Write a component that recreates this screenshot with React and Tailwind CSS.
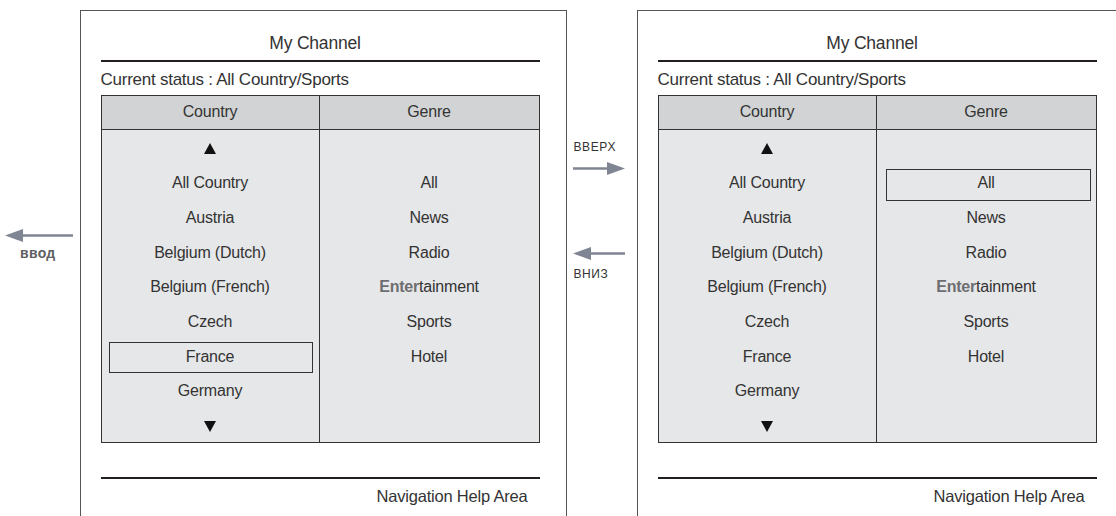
const countries = ['All Country', 'Austria', 'Belgium (Dutch)', 'Belgium (French)', 'Czech', 'France', 'Germany'];
const genres = ['All', 'News', 'Radio', 'Entertainment', 'Sports', 'Hotel'];

function Tri({ down = false }) {
  return (
    <svg width="12" height="11" viewBox="0 0 12 11">
      {down ? <polygon points="0,0 12,0 6,11" fill="#111" /> : <polygon points="6,0 12,11 0,11" fill="#111" />}
    </svg>
  );
}

function Row({ children, box, boxClass }) {
  return (
    <div className="relative h-[34.67px] flex items-center justify-center pt-[4px]">
      {box && <div className={`absolute border-[1.5px] border-[#333] ${boxClass}`} />}
      <span className="relative">{children}</span>
    </div>
  );
}

function GenreLabel({ g }) {
  if (g === 'Entertainment') {
    return (
      <>
        <span className="font-bold text-[#6d6e71]">Enter</span>tainment
      </>
    );
  }
  return g;
}

function Panel({ selCountry, selGenre }) {
  return (
    <div className="shrink-0 w-[487px] h-[530px] mt-[10px] border-[1.5px] border-[#555] pl-[19.5px]">
      <div className="w-[439px]">
        <div className="h-[48.5px] pt-[22px] pr-[10px] leading-[20px] text-center text-[17.5px]">My Channel</div>
        <div className="h-[2.5px] bg-[#231f20]" />
        <div className="h-[32.5px] pt-[7.5px] leading-[20px] text-[17px] tracking-[-0.25px]">Current status : All Country/Sports</div>
        <div className="border border-[#333]">
          <div className="grid grid-cols-[218px_1fr] h-[34px] bg-[#d1d3d4] border-b border-[#333]">
            <div className="flex items-center justify-center border-r border-[#333]">Country</div>
            <div className="flex items-center justify-center">Genre</div>
          </div>
          <div className="grid grid-cols-[218px_1fr] h-[312px] bg-[#e6e7e8]">
            <div className="border-r border-[#333]">
              <Row><Tri /></Row>
              {countries.map((c) => (
                <Row key={c} box={c === selCountry} boxClass="left-[7px] right-[6px] top-[4.5px] h-[31px]">
                  {c}
                </Row>
              ))}
              <Row><Tri down /></Row>
            </div>
            <div>
              <Row />
              {genres.map((g) => (
                <Row key={g} box={g === selGenre} boxClass="left-[9px] right-[5px] top-[4.5px] h-[32px]">
                  <GenreLabel g={g} />
                </Row>
              ))}
            </div>
          </div>
        </div>
        <div className="mt-[34px] h-[2.5px] bg-[#231f20]" />
        <div className="mt-[6.5px] leading-[20px] text-right pr-[12px] text-[16.5px]">Navigation Help Area</div>
      </div>
    </div>
  );
}

function Arrow({ left = false, width = 52 }) {
  return (
    <svg width={width} height="13" viewBox={`0 0 ${width} 13`}>
      {left ? (
        <>
          <polygon points={`0,6.5 18,0 18,13`} fill="#7f8593" />
          <rect x="16" y="5.25" width={width - 16} height="2.5" fill="#7f8593" />
        </>
      ) : (
        <>
          <rect x="0" y="5.25" width={width - 16} height="2.5" fill="#7f8593" />
          <polygon points={`${width},6.5 ${width - 18},0 ${width - 18},13`} fill="#7f8593" />
        </>
      )}
    </svg>
  );
}

export default function App() {
  return (
    <div
      className="w-[1116px] h-[516px] overflow-hidden bg-white flex text-[16px] text-[#333] tracking-[-0.2px]"
      style={{ fontFamily: '"Liberation Sans", Arial, sans-serif' }}
    >
      <div className="shrink-0 w-[80px] pt-[229px] pl-[5px]">
        <Arrow left width={68} />
        <div className="mt-[3px] pl-[15px] leading-[16px] text-[14px] font-bold tracking-[0.3px] text-[#5f6063]">ввод</div>
      </div>
      <Panel selCountry="France" selGenre={null} />
      <div className="shrink-0 w-[70px] pt-[140px] pl-[5.5px] text-[12px] leading-[14px] tracking-[0.6px] text-[#333]">
        <div className="pl-[1px]">ВВЕРХ</div>
        <div className="mt-[8px]"><Arrow width={52} /></div>
        <div className="mt-[72px]"><Arrow left width={52} /></div>
        <div className="mt-[7px] pl-[1px]">ВНИЗ</div>
      </div>
      <Panel selCountry={null} selGenre="All" />
    </div>
  );
}
